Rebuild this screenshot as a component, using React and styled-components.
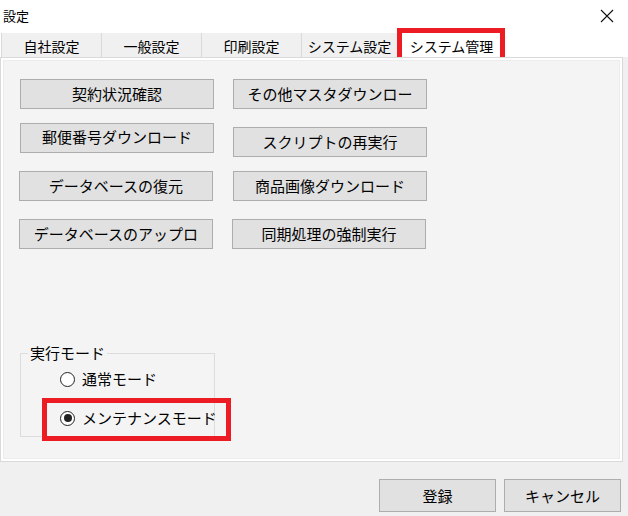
import React from "react";
import styled, { createGlobalStyle } from "styled-components";

const GlobalStyle = createGlobalStyle`
  html, body { margin: 0; padding: 0; }
  body {
    background: #f0f0f0;
    font-family: "Noto Sans CJK JP", "Noto Sans", sans-serif;
    color: #000;
  }
  * { box-sizing: border-box; }
`;

const Window = styled.div`
  width: 628px;
  height: 516px;
  display: flex;
  flex-direction: column;
  background: #f0f0f0;
  overflow: hidden;
`;

const TitleBar = styled.div`
  height: 33px;
  flex: none;
  background: #fff;
  display: flex;
  align-items: center;
  justify-content: space-between;
  padding: 0 14px 1px 3px;
`;

const Title = styled.span`
  font-size: 13px;
  line-height: 16px;
`;

const CloseIcon = styled.svg`
  width: 14px;
  height: 14px;
  display: block;
`;

const TabStrip = styled.div`
  position: relative;
  height: 24px;
  flex: none;
  display: flex;
  background: #fff;
  padding-left: 1px;
`;

const Tab = styled.div`
  width: ${(p) => p.$w}px;
  height: 24px;
  border-left: 1px solid #d9d9d9;
  background: ${(p) => (p.$active ? "#fff" : "#f0f0f0")};
  display: flex;
  align-items: center;
  justify-content: center;
  font-size: 14px;
  line-height: 16px;
  padding-top: 1px;
  white-space: nowrap;
`;

const Highlight = styled.div`
  position: absolute;
  left: ${(p) => p.$x}px;
  top: ${(p) => p.$y}px;
  width: ${(p) => p.$w}px;
  height: ${(p) => p.$h}px;
  border: 5px solid #ed1c24;
  pointer-events: none;
`;

const Panel = styled.div`
  position: relative;
  width: 623px;
  height: 405px;
  flex: none;
  border: 1px solid #d9d9d9;
  background: #f4f4f4;
  box-shadow: inset 0 0 0 2px #fff, inset 0 0 0 3px #ececec;
  padding: 21px 0 0 19px;
`;

const Columns = styled.div`
  display: flex;
  gap: 19px;
`;

const Column = styled.div`
  display: flex;
  flex-direction: column;
  width: 194px;
`;

const ActionButton = styled.button`
  width: 194px;
  height: 30px;
  margin-top: ${(p) => p.$mt || 0}px;
  margin-left: ${(p) => p.$dx || 0}px;
  padding: 0 0 ${(p) => p.$pb || 0}px;
  background: #e1e1e1;
  border: 1px solid #adadad;
  border-radius: 0;
  font-family: inherit;
  font-size: 15px;
  line-height: 18px;
  color: #000;
  white-space: nowrap;
  overflow: hidden;
  display: flex;
  align-items: center;
  justify-content: center;
`;

const GroupBox = styled.div`
  position: relative;
  width: 195px;
  height: 84px;
  margin-top: 104px;
  border: 1px solid #dcdcdc;
  padding-top: 15px;
`;

const Legend = styled.span`
  position: absolute;
  left: 7px;
  top: -11px;
  padding: 0 2px;
  background: #f4f4f4;
  font-size: 15px;
  line-height: 20px;
`;

const RadioRow = styled.label`
  display: flex;
  align-items: center;
  gap: 7px;
  height: 20px;
  padding-left: 39px;
  margin-top: ${(p) => p.$mt || 0}px;
  font-size: 15px;
  line-height: 20px;
  white-space: nowrap;
  width: max-content;
`;

const RadioCircle = styled.span`
  width: 15px;
  height: 15px;
  min-width: 15px;
  border-radius: 50%;
  border: 1px solid #222;
  background: #fff;
  display: flex;
  align-items: center;
  justify-content: center;
  flex: none;
  &::after {
    content: "";
    width: 8px;
    height: 8px;
    border-radius: 50%;
    background: #222;
    display: ${(p) => (p.$checked ? "block" : "none")};
  }
`;

const Footer = styled.div`
  display: flex;
  justify-content: flex-end;
  gap: 8px;
  padding: 17px 7px 0 0;
`;

const DialogButton = styled.button`
  width: 117px;
  height: 33px;
  background: #e1e1e1;
  border: 1px solid #adadad;
  border-radius: 0;
  font-family: inherit;
  font-size: 15px;
  line-height: 18px;
  color: #000;
  padding: 0;
`;

const tabs = [
  { label: "自社設定", w: 100 },
  { label: "一般設定", w: 100 },
  { label: "印刷設定", w: 100 },
  { label: "システム設定", w: 96 },
  { label: "システム管理", w: 108, active: true },
];

const leftButtons = [
  { label: "契約状況確認", mt: 0 },
  { label: "郵便番号ダウンロード", mt: 14, pb: 3 },
  { label: "データベースの復元", mt: 18, dx: -1 },
  { label: "データベースのアップロ", mt: 18, dx: -1 },
];

const rightButtons = [
  { label: "その他マスタダウンロー", mt: 0 },
  { label: "スクリプトの再実行", mt: 18 },
  { label: "商品画像ダウンロード", mt: 14 },
  { label: "同期処理の強制実行", mt: 18, dx: -1 },
];

export default function App() {
  return (
    <>
      <GlobalStyle />
      <Window>
        <TitleBar>
          <Title>設定</Title>
          <CloseIcon viewBox="0 0 14 14">
            <path d="M1 1 L13 13 M13 1 L1 13" stroke="#111" strokeWidth="1.1" fill="none" />
          </CloseIcon>
        </TitleBar>
        <TabStrip>
          {tabs.map((t) => (
            <Tab key={t.label} $w={t.w} $active={t.active}>
              {t.label}
            </Tab>
          ))}
          <Highlight $x={397} $y={-5} $w={108} $h={35} />
        </TabStrip>
        <Panel>
          <Columns>
            <Column>
              {leftButtons.map((b) => (
                <ActionButton key={b.label} $mt={b.mt} $dx={b.dx} $pb={b.pb}>
                  {b.label}
                </ActionButton>
              ))}
            </Column>
            <Column>
              {rightButtons.map((b) => (
                <ActionButton key={b.label} $mt={b.mt} $dx={b.dx} $pb={b.pb}>
                  {b.label}
                </ActionButton>
              ))}
            </Column>
          </Columns>
          <GroupBox>
            <Legend>実行モード</Legend>
            <RadioRow>
              <RadioCircle />
              通常モード
            </RadioRow>
            <RadioRow $mt={19}>
              <RadioCircle $checked />
              メンテナンスモード
            </RadioRow>
            <Highlight $x={21} $y={44} $w={189} $h={43} />
          </GroupBox>
        </Panel>
        <Footer>
          <DialogButton>登録</DialogButton>
          <DialogButton>キャンセル</DialogButton>
        </Footer>
      </Window>
    </>
  );
}
